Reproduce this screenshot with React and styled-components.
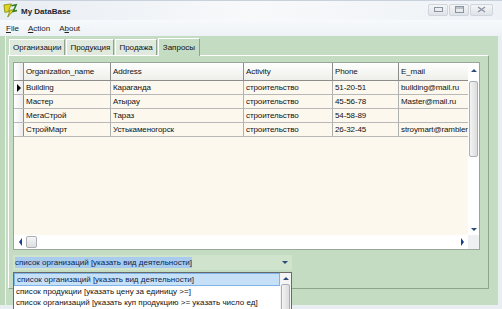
import React from "react";
import styled, { createGlobalStyle } from "styled-components";

const GlobalStyle = createGlobalStyle`
  html, body {
    margin: 0;
    padding: 0;
    background: #ffffff;
  }
  body {
    font-family: "Liberation Sans", Arial, sans-serif;
  }
`;

const UI_FONT = `"Liberation Sans", Arial, sans-serif`;

const columns = [
  { title: "Organization_name", width: 87 },
  { title: "Address", width: 133 },
  { title: "Activity", width: 89 },
  { title: "Phone", width: 66 },
  { title: "E_mail", width: 71 },
];

const rows = [
  ["Building", "Караганда", "строительство", "51-20-51", "building@mail.ru"],
  ["Мастер", "Атырау", "строительство", "45-56-78", "Master@mail.ru"],
  ["МегаСтрой", "Тараз", "строительство", "54-58-89", ""],
  ["СтройМарт", "Устькаменогорск", "строительство", "26-32-45", "stroymart@rambler.ru"],
];

const queries = [
  "список организаций [указать вид деятельности]",
  "список продукции [указать цену за единицу >=]",
  "список организаций [указать куп продукцию >= указать число ед]",
  "список продаж [указать дату продажи] [указать организацию]",
];

const App = () => {
  return (
    <>
      <GlobalStyle />
      <Window>
        <TitleBar>
          <AppIcon viewBox="0 0 16 16">
            <path d="M1 2 L9 1 L6 8 L12 7 L5 15 L7 9 L2 10 Z" fill="#e8d21c" stroke="#6b8a10" strokeWidth="0.8" />
            <path d="M9 3 L14 2 L11 9 L15 8" fill="none" stroke="#2f7d1c" strokeWidth="1.6" />
          </AppIcon>
          <Title>My DataBase</Title>
          <CaptionButtons>
            <CaptionButton>
              <svg width="9" height="5" viewBox="0 0 9 5">
                <rect x="0.5" y="0.5" width="8" height="4" fill="none" stroke="#8a94a2" />
              </svg>
            </CaptionButton>
            <CaptionButton>
              <svg width="9" height="7" viewBox="0 0 9 7">
                <rect x="0.5" y="0.5" width="8" height="6" fill="none" stroke="#8a94a2" />
                <line x1="0" y1="2" x2="9" y2="2" stroke="#8a94a2" />
              </svg>
            </CaptionButton>
            <CaptionButton $wide>
              <svg width="9" height="7" viewBox="0 0 9 7">
                <path d="M1 1 L8 6 M8 1 L1 6" stroke="#8a94a2" strokeWidth="1.4" />
              </svg>
            </CaptionButton>
          </CaptionButtons>
        </TitleBar>

        <MenuBar>
          <MenuItem><u>F</u>ile</MenuItem>
          <MenuItem><u>A</u>ction</MenuItem>
          <MenuItem>A<u>b</u>out</MenuItem>
        </MenuBar>

        <Body>
          <Tabs>
            <Tab>Организации</Tab>
            <Tab>Продукция</Tab>
            <Tab>Продажа</Tab>
            <Tab $active>Запросы</Tab>
          </Tabs>
          <TabPanel>
            <Grid>
              <GridMain>
                <GridTable>
                  <HeaderRow>
                    <RowHead />
                    {columns.map((c) => (
                      <HeadCell key={c.title} style={{ width: c.width }}>
                        {c.title}
                      </HeadCell>
                    ))}
                  </HeaderRow>
                  {rows.map((r, i) => (
                    <DataRow key={i}>
                      <RowHead>{i === 0 && <Pointer />}</RowHead>
                      {r.map((v, j) => (
                        <Cell key={j} style={{ width: columns[j].width }}>
                          {v}
                        </Cell>
                      ))}
                    </DataRow>
                  ))}
                </GridTable>
                <VScroll>
                  <Arrow $dir="up" />
                  <Track>
                    <Thumb $h={76} />
                  </Track>
                  <Arrow $dir="down" />
                </VScroll>
              </GridMain>
              <HScroll>
                <Arrow $dir="left" />
                <HThumb />
                <HTrack />
                <Arrow $dir="right" />
                <Corner />
              </HScroll>
            </Grid>

            <ComboWrap>
              <Combo>
                <ComboText>{queries[0]}</ComboText>
                <Arrow $dir="down" />
              </Combo>
              <DropList>
                <Items>
                  {queries.map((q, i) => (
                    <Item key={i} $selected={i === 0}>
                      {q}
                    </Item>
                  ))}
                </Items>
                <ListScroll>
                  <Arrow $dir="up" />
                  <Thumb $h={40} />
                </ListScroll>
              </DropList>
            </ComboWrap>
          </TabPanel>
        </Body>
      </Window>
    </>
  );
};

const Window = styled.div`
  width: 502px;
  height: 309px;
  display: flex;
  flex-direction: column;
  background: #e9eef3;
  overflow: hidden;
  position: relative;
`;

const TitleBar = styled.div`
  height: 20px;
  display: flex;
  align-items: center;
  padding: 0 6px 0 3px;
  background: linear-gradient(to right, #e8edf2 0%, #f8f9fb 50%, #eef2f6 100%);
  border-top: 1px solid #c9d2dc;
  box-sizing: border-box;
`;

const AppIcon = styled.svg`
  width: 15px;
  height: 15px;
  margin-right: 3px;
`;

const Title = styled.span`
  font-family: ${UI_FONT};
  font-weight: bold;
  font-size: 8px;
  color: #1b2430;
  flex: 1;
  padding-top: 1px;
`;

const CaptionButtons = styled.div`
  display: flex;
  gap: 1px;
  margin-top: -2px;
  margin-right: 3px;
`;

const CaptionButton = styled.div`
  width: ${(p) => (p.$wide ? 21 : 18)}px;
  height: 10px;
  display: flex;
  align-items: center;
  justify-content: center;
  background: linear-gradient(#f4f5f7, #dfe3e8);
  border: 1px solid #cfd5dc;
  border-radius: 2px;
`;

const MenuBar = styled.div`
  height: 16px;
  display: flex;
  align-items: center;
  gap: 9px;
  padding: 0 6px;
  background: linear-gradient(#f7f9fb, #eef2f6);
  color: #222;
`;

const MenuItem = styled.span`
  font-family: ${UI_FONT};
  font-size: 8px;
`;

const Body = styled.div`
  flex: 1;
  background: #c4dcc2;
  margin: 0 4px 4px 0;
  border-left: 5px solid #bdd8bb;
  padding: 2px 9px 0 3px;
  display: flex;
  flex-direction: column;
  box-shadow: inset 1px 0 0 #eef5ee;
`;

const Tabs = styled.div`
  display: flex;
  align-items: flex-end;
  height: 17px;
  padding-left: 1px;
`;

const Tab = styled.div`
  font-family: ${UI_FONT};
  font-size: 8px;
  color: #111;
  height: ${(p) => (p.$active ? 17 : 15)}px;
  padding: 0 ${(p) => (p.$active ? 4 : 3)}px;
  display: flex;
  align-items: center;
  background: ${(p) => (p.$active ? "#c4dcc2" : "#dfe9dd")};
  border: 1px solid #ffffff;
  border-right-color: #8fa48e;
  border-bottom: none;
  margin-right: ${(p) => (p.$active ? 0 : 1)}px;
  position: relative;
  z-index: ${(p) => (p.$active ? 1 : 0)};
  margin-bottom: ${(p) => (p.$active ? -1 : 0)}px;
`;

const TabPanel = styled.div`
  flex: 1;
  border: 1px solid #ffffff;
  border-right-color: #8fa48e;
  border-bottom-color: #8fa48e;
  padding: 6px 8px 0 4px;
  display: flex;
  flex-direction: column;
  margin-bottom: 16px;
`;

const Grid = styled.div`
  height: 186px;
  display: flex;
  flex-direction: column;
  background: #fdf8ee;
  border: 1px solid #9aa69a;
`;

const GridMain = styled.div`
  flex: 1;
  display: flex;
  min-height: 0;
`;

const GridTable = styled.div`
  flex: 1;
  overflow: hidden;
  display: flex;
  flex-direction: column;
`;

const HeaderRow = styled.div`
  display: flex;
  height: 17px;
  flex-shrink: 0;
  background: linear-gradient(#ffffff, #eeeeea);
  border-bottom: 1px solid #8c8c8c;
`;

const DataRow = styled.div`
  display: flex;
  height: 13px;
  flex-shrink: 0;
  border-bottom: 1px solid #b8b8b8;
`;

const RowHead = styled.div`
  width: 9px;
  flex-shrink: 0;
  background: linear-gradient(to right, #ffffff, #ececec);
  border-right: 1px solid #8c8c8c;
  display: flex;
  align-items: center;
  justify-content: center;
`;

const Pointer = styled.span`
  width: 0;
  height: 0;
  border-top: 4px solid transparent;
  border-bottom: 4px solid transparent;
  border-left: 4px solid #000;
`;

const cellBase = `
  flex-shrink: 0;
  box-sizing: border-box;
  padding-left: 2px;
  font-family: ${UI_FONT};
  font-size: 8px;
  letter-spacing: -0.1px;
  color: #111;
  white-space: nowrap;
  overflow: hidden;
  display: flex;
  align-items: center;
  border-right: 1px solid #b0b0b0;
`;

const HeadCell = styled.div`
  ${cellBase}
  border-right-color: #8c8c8c;
`;

const Cell = styled.div`
  ${cellBase}
`;

const VScroll = styled.div`
  width: 11px;
  display: flex;
  flex-direction: column;
  align-items: center;
  background: #ffffff;
  padding-top: 2px;
`;

const Track = styled.div`
  flex: 1;
  width: 100%;
  display: flex;
  flex-direction: column;
  align-items: center;
  padding-top: 5px;
`;

const Thumb = styled.div`
  width: 9px;
  height: ${(p) => p.$h}px;
  background: linear-gradient(to right, #f4f4f4, #dcdcdc);
  border: 1px solid #a9b0b8;
  border-radius: 2px;
  box-sizing: border-box;
`;

const arrowShapes = {
  up: "border-left: 3px solid transparent; border-right: 3px solid transparent; border-bottom: 3px solid #2a4d7a;",
  down: "border-left: 3px solid transparent; border-right: 3px solid transparent; border-top: 3px solid #2a4d7a;",
  left: "border-top: 4px solid transparent; border-bottom: 4px solid transparent; border-right: 3px solid #1a3d8a;",
  right: "border-top: 4px solid transparent; border-bottom: 4px solid transparent; border-left: 3px solid #1a3d8a;",
};

const Arrow = styled.span`
  width: 0;
  height: 0;
  flex-shrink: 0;
  margin: 4px;
  ${(p) => arrowShapes[p.$dir]}
`;

const HScroll = styled.div`
  height: 14px;
  display: flex;
  align-items: center;
  background: #ffffff;
  padding-left: 1px;
`;

const HThumb = styled.div`
  width: 9px;
  height: 10px;
  background: linear-gradient(#f6f6f6, #dedede);
  border: 1px solid #a9b0b8;
  border-radius: 2px;
`;

const HTrack = styled.div`
  flex: 1;
`;

const Corner = styled.div`
  width: 11px;
  height: 14px;
  background: #eef0f2;
`;

const ComboWrap = styled.div`
  position: relative;
  margin-top: 5px;
  width: 279px;
`;

const Combo = styled.div`
  height: 15px;
  display: flex;
  align-items: center;
  justify-content: space-between;
  background: #cfe3cd;
  padding-left: 2px;
`;

const ComboText = styled.span`
  font-family: ${UI_FONT};
  font-size: 8px;
  color: #10244a;
  background: #a9ccee;
  padding: 1px 0;
  white-space: nowrap;
`;

const DropList = styled.div`
  position: absolute;
  top: 17px;
  left: 0;
  width: 279px;
  height: 50px;
  background: #ffffff;
  border: 1px solid #6a6a6a;
  box-sizing: border-box;
  display: flex;
  z-index: 5;
`;

const Items = styled.div`
  flex: 1;
  overflow: hidden;
`;

const Item = styled.div`
  height: 11px;
  line-height: 11px;
  padding-left: 2px;
  font-family: ${UI_FONT};
  font-size: 8px;
  color: ${(p) => (p.$selected ? "#10244a" : "#111")};
  background: ${(p) => (p.$selected ? "#c6e0f8" : "transparent")};
  border: 1px solid ${(p) => (p.$selected ? "#7eb4ea" : "transparent")};
  border-width: ${(p) => (p.$selected ? 1 : 0)}px;
  white-space: nowrap;
`;

const ListScroll = styled.div`
  width: 11px;
  display: flex;
  flex-direction: column;
  align-items: center;
  background: #f4f4f4;
`;

export default App;
